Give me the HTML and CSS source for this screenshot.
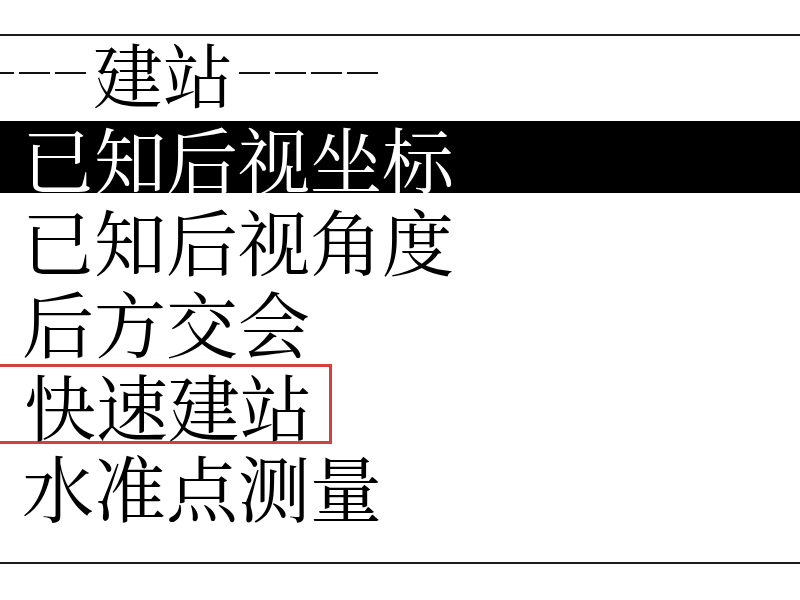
FILE: index.html
```html
<!DOCTYPE html>
<html lang="zh-CN">
<head>
  <meta charset="UTF-8">
  <meta name="viewport" content="width=device-width, initial-scale=1.0">
  <title>建站</title>
  <link rel="stylesheet" href="styles.css">
</head>
<body>
  <div class="screen">
    <div class="title">
      <span class="dashes dashes-left"></span>
      <span class="title-text">建站</span>
      <span class="dashes dashes-right"></span>
    </div>

    <ul class="menu">
      <li class="menu-item selected"><span class="label">已知后视坐标</span></li>
      <li class="menu-item"><span class="label">已知后视角度</span></li>
      <li class="menu-item"><span class="label">后方交会</span></li>
      <li class="menu-item"><span class="label marked">快速建站</span></li>
      <li class="menu-item"><span class="label">水准点测量</span></li>
    </ul>
  </div>
</body>
</html>
```

FILE: styles.css
```css
body {
  margin: 0;
  background-color: #fff;
  font-family: "Noto Serif CJK SC", "Noto Sans CJK SC", serif;
  overflow: hidden;
}

.screen {
  margin-top: 34px;
  height: 530px;
  border-top: 2px solid #1c1c1c;
  border-bottom: 2px solid #1c1c1c;
  box-sizing: border-box;
}

/* ----建站----- header line */
.title {
  display: flex;
  align-items: center;
  height: 80px;
  padding-bottom: 6px;
  box-sizing: border-box;
}

.title-text {
  font-size: 70px;
  line-height: 1;
  color: #000;
  margin: 0 6px 0 7px;
}

.dashes {
  height: 2px;
  background: repeating-linear-gradient(to right, #111 0 31px, transparent 31px 36px);
}

.dashes-left {
  width: 86px;
  background: repeating-linear-gradient(to left, #111 0 31px, transparent 31px 36px);
}

.dashes-right {
  width: 142px;
}

.menu {
  list-style: none;
  margin: 0;
  padding: 0;
}

.menu-item {
  height: 82px;
  display: flex;
  align-items: center;
  font-size: 72px;
  color: #000;
}

.menu-item.selected {
  color: #fff;
  padding: 5px 0;
  box-sizing: border-box;
}

.menu-item.selected .label {
  flex: 1;
  align-self: stretch;
  display: flex;
  align-items: center;
  background-color: #000;
}

.label {
  padding-left: 22px;
  line-height: 1;
}

.label.marked {
  margin-left: -4px;
  margin-top: 2px;
  padding: 1px 17px 1px 25px;
  border: 3px solid #d2403f;
}
```
